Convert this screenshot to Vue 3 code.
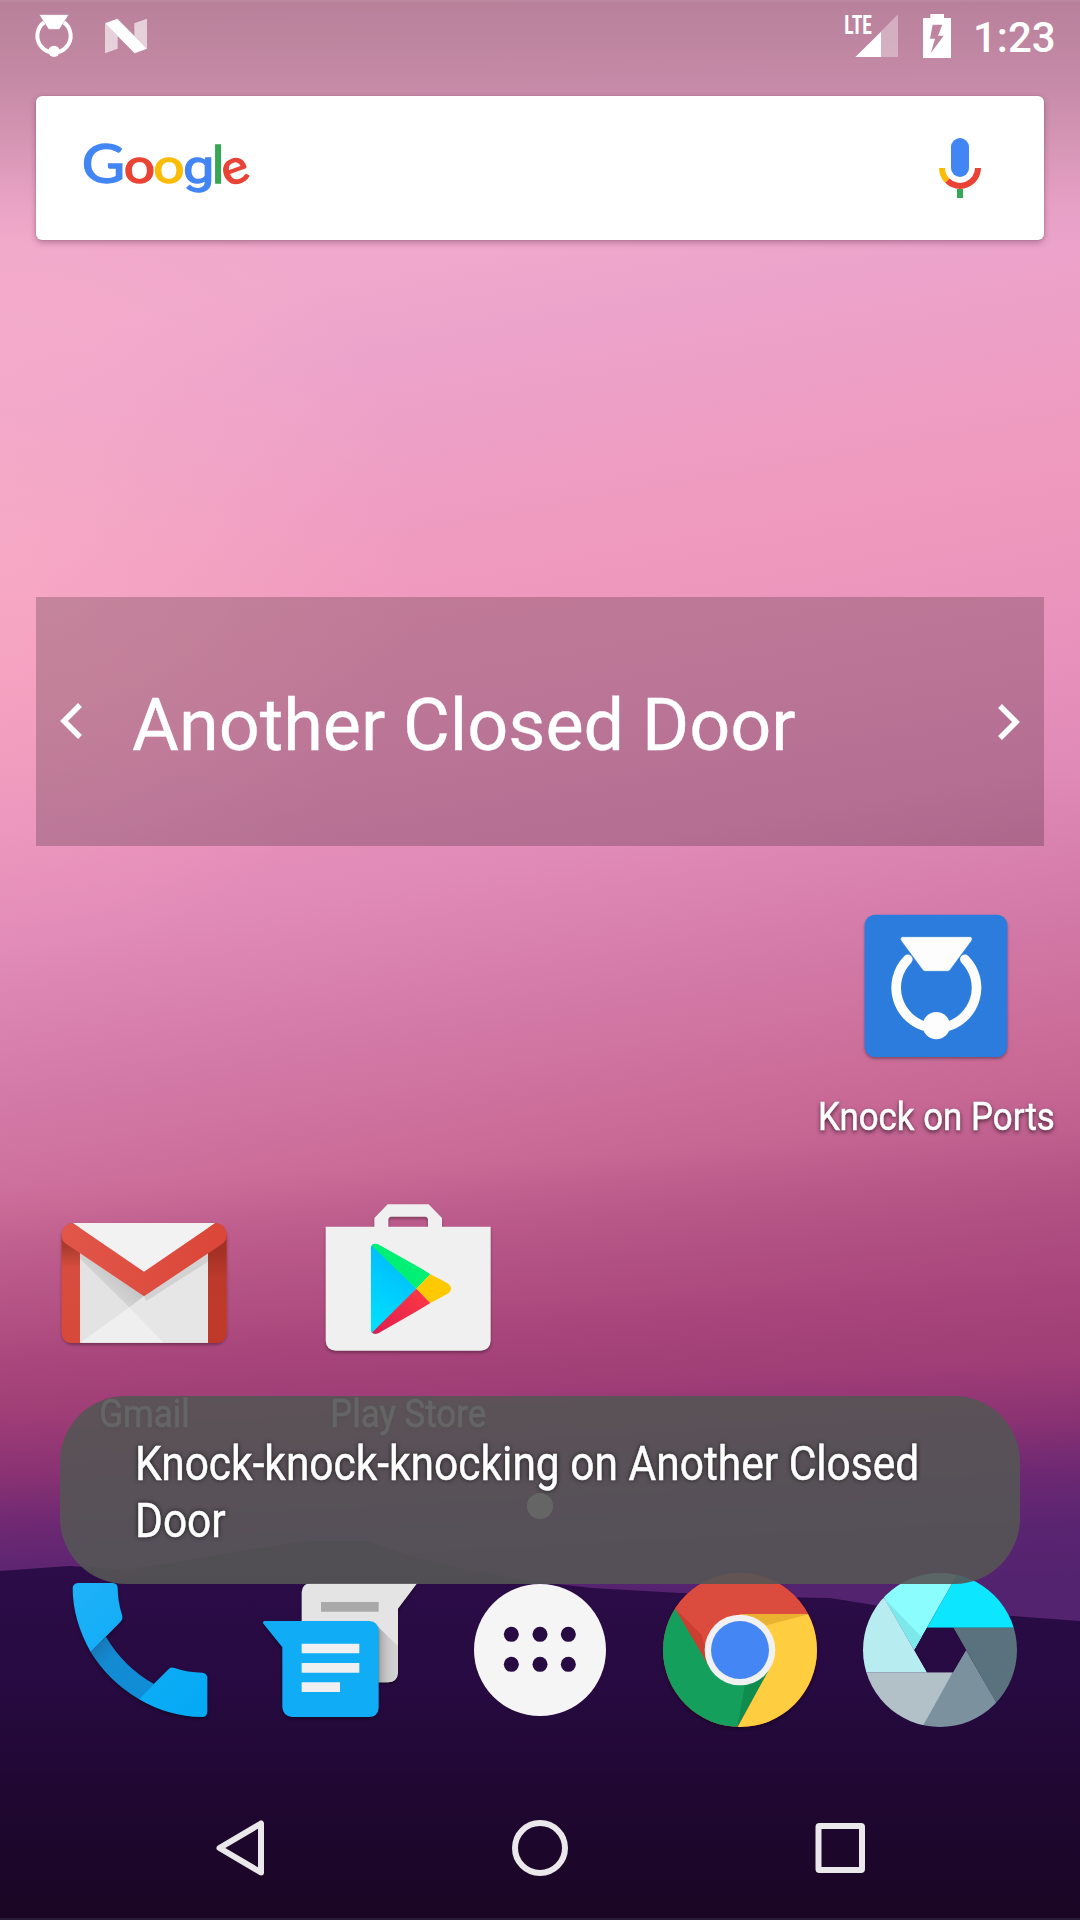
<script setup>
const dots = [[214, 223], [300, 223], [385, 223], [214, 313], [300, 313], [385, 313]]
</script>

<template>
  <main class="screen">
    <svg class="wallpaper" viewBox="0 0 1080 1920" aria-hidden="true">
      <defs>
        <linearGradient id="hill" x1="0" y1="1540" x2="0" y2="1920" gradientUnits="userSpaceOnUse">
          <stop offset="0" stop-color="#2d0d4a" />
          <stop offset=".4" stop-color="#260a40" />
          <stop offset=".7" stop-color="#1f0730" />
          <stop offset="1" stop-color="#1a0624" />
        </linearGradient>
      </defs>
      <path fill="url(#hill)" d="M0 1571L40 1568L70 1566L130 1570L227 1553L307 1541L367 1541L417 1558L480 1572L540 1582L592 1588L680 1593L770 1597L830 1598L880 1606L1013 1616L1080 1621V1920H0Z" />
      <path fill="#2a1c38" d="M0 1918H1080V1920H0Z" />
    </svg>

    <header class="status">
      <svg width="160" height="72" viewBox="0 0 480 216">
        <path d="M134 66A50 50 0 1 0 190 66" fill="none" stroke="#fff" stroke-width="12" />
        <path d="M118 44H206L178 88H146Z" fill="#fff" stroke="#b8869f" stroke-width="1" />
        <circle cx="162" cy="154" r="17" fill="#fff" />
        <path d="M315 70L353 108V146L315 160ZM441 56V146L403 108V70Z" fill="#fff" opacity=".62" />
        <path d="M315 70L352 56L441 146L404 160Z" fill="#fff" />
      </svg>
      <div class="status-right">
        <svg width="133" height="72" viewBox="180 0 399 216">
          <text class="lte" x="193" y="101" textLength="83" lengthAdjust="spacingAndGlyphs">LTE</text>
          <path d="M354 43V171H302V95Z" fill="#fff" opacity=".35" />
          <path d="M303 95V171H226Z" fill="#fff" />
          <path fill="#fff" fill-rule="evenodd" d="M451 42H492V54H513V174H429V54H451ZM458 74L450 116H465L452 160L491 107H474L487 74Z" />
        </svg>
        <time class="clock">1:23</time>
      </div>
    </header>

    <section class="search">
      <svg class="logo" width="180" height="80" viewBox="240 390 540 240" aria-label="Google">
        <text class="g-main" x="245" y="547" fill="#4285f4" stroke="#4285f4" font-size="160" textLength="130" lengthAdjust="spacingAndGlyphs">G</text>
        <text class="g-main" x="371" y="547" fill="#ea4335" stroke="#ea4335" font-size="144" textLength="94" lengthAdjust="spacingAndGlyphs">o</text>
        <text class="g-main" x="460" y="547" fill="#fbbc05" stroke="#fbbc05" font-size="144" textLength="94" lengthAdjust="spacingAndGlyphs">o</text>
        <text class="g-tail" x="549" y="547" fill="#4285f4" stroke="#4285f4" font-size="140" textLength="94" lengthAdjust="spacingAndGlyphs">g</text>
        <text class="g-main" x="636" y="547" fill="#34a853" stroke="#34a853" font-size="154">l</text>
        <text class="g-main" x="666" y="547" fill="#ea4335" stroke="#ea4335" font-size="144" textLength="80" lengthAdjust="spacingAndGlyphs" transform="rotate(-20 708 510)">e</text>
      </svg>
      <svg width="60" height="96" viewBox="450 360 180 288">
        <rect x="513" y="414" width="54" height="117" rx="27" fill="#4285f4" />
        <path d="M486 504A54 54 0 0 0 502 542" fill="none" stroke="#fbbc05" stroke-width="18" />
        <path d="M502 542A54 54 0 0 0 594 504" fill="none" stroke="#ea4335" stroke-width="18" />
        <rect x="531" y="567" width="18" height="27" fill="#34a853" />
      </svg>
    </section>

    <section class="widget">
      <svg width="72" height="80" viewBox="0 0 72 80"><path d="M44 23L28 39L44 55" /></svg>
      <span class="widget-title">Another Closed Door</span>
      <svg width="72" height="80" viewBox="0 0 72 80"><path d="M28 24L44 40L28 56" /></svg>
    </section>

    <section class="apps">
      <div class="app last-col">
        <svg width="264" height="180" viewBox="12 15 792 540">
          <rect class="shadow" x="194" y="74" width="428" height="427" rx="32" fill="#2b7cdd" />
          <path d="M323.400 208A121 121 0 0 0 384 411.400M494.600 208A121 121 0 0 1 434 411.400" fill="none" stroke="#fdfdfd" stroke-width="29" stroke-linecap="round" />
          <path d="M306 140H513Q519 144 515 152L451 239Q448 244 443 244H376Q371 244 368 240L303 152Q299 143 306 140Z" fill="#fdfdfd" stroke="#2b7cdd" stroke-width="2" />
          <circle cx="409" cy="407" r="41" fill="#fdfdfd" />
        </svg>
        <span class="label"><b>Knock on Ports</b></span>
      </div>
      <div class="app">
        <svg width="264" height="180" viewBox="-84 6 792 540">
          <defs>
            <clipPath id="mailBox"><rect x="120" y="99" width="384" height="359" /></clipPath>
            <linearGradient id="mailLeft" x1="0" y1="0" x2="0" y2="1"><stop offset=".1" stop-color="#a93a2e" /><stop offset=".3" stop-color="#d64d3f" /><stop offset="1" stop-color="#d7493a" /></linearGradient>
            <linearGradient id="mailRight" x1="0" y1="0" x2="0" y2="1"><stop offset=".15" stop-color="#a33124" /><stop offset=".4" stop-color="#bc3a2b" /><stop offset="1" stop-color="#c03928" /></linearGradient>
            <linearGradient id="fold" x1="0" y1="0" x2="1" y2="0"><stop offset="0" stop-color="#e05649" /><stop offset="1" stop-color="#db4638" /></linearGradient>
            <linearGradient id="flapShade" x1="268" y1="260" x2="190" y2="340" gradientUnits="userSpaceOnUse"><stop offset="0" stop-color="#c2c2c2" /><stop offset="1" stop-color="#dedede" /></linearGradient>
          </defs>
          <rect class="shadow" x="65" y="99" width="495" height="360" rx="36" fill="#d64d3f" />
          <path d="M65 135H122V459H99Q65 459 65 425Z" fill="url(#mailLeft)" />
          <path d="M503 135H560V425Q560 459 526 459H503Z" fill="url(#mailRight)" />
          <g clip-path="url(#mailBox)">
            <path d="M120 99H504V459H120Z" fill="#e3e3e3" />
            <path d="M312 320L504 190V459H372L268 352Z" fill="#e6e6e6" />
            <path d="M312 316L504 186V215L318 334Z" fill="#d2d2d2" />
            <path d="M120 190L312 318L268 352L120 206Z" fill="url(#flapShade)" />
            <path d="M120 459L268 352L372 459Z" fill="#efefef" />
          </g>
          <path d="M98 99H526L312 246Z" fill="#f2f2f2" />
          <path d="M98 99L312 245L526 99Q560 104 560 138Q560 152 546 162L312 319L79 162Q65 152 65 138Q65 104 98 99Z" fill="url(#fold)" />
        </svg>
        <span class="label"><b>Gmail</b></span>
      </div>
      <div class="app">
        <svg width="264" height="180" viewBox="708 6 792 540">
          <defs>
            <clipPath id="playClip"><path d="M992 175Q994 157 1013 162L1225 281Q1242 296 1225 310L1015 430Q994 436 992 418Z" /></clipPath>
            <linearGradient id="playBlue" x1=".5" y1="0" x2=".2" y2="1"><stop offset="0" stop-color="#00b9fb" /><stop offset="1" stop-color="#00e2ff" /></linearGradient>
            <linearGradient id="playRed" x1="1" y1="0" x2="0" y2="1"><stop offset="0" stop-color="#ff3a44" /><stop offset="1" stop-color="#dc1b50" /></linearGradient>
          </defs>
          <path class="shadow" fill="#f0f0f0" fill-rule="evenodd" d="M857 110H1003V84L1043 43H1166L1206 84V110H1352V453Q1350 480 1323 482H886Q859 480 857 453ZM1045 110H1164V88Q1163 80 1156 80H1053Q1046 80 1045 88Z" />
          <g clip-path="url(#playClip)">
            <path d="M980 150H1000L1129 296L1000 440H980Z" fill="url(#playBlue)" />
            <path d="M990 150H1020L1171 253L1129 296L994 166Z" fill="#00f076" />
            <path d="M1171 253L1260 296L1171 339L1129 296Z" fill="#ffc900" />
            <path d="M1129 296L1171 339L1010 440L990 434Z" fill="url(#playRed)" />
          </g>
        </svg>
        <span class="label"><b>Play Store</b></span>
      </div>
    </section>

    <div class="pages"><i></i></div>

    <section class="dock">
      <svg viewBox="0 0 600 540">
        <defs><linearGradient id="phoneGrad" x1="100" y1="70" x2="500" y2="470" gradientUnits="userSpaceOnUse"><stop offset="0" stop-color="#1eb1f8" /><stop offset="1" stop-color="#03a9f4" /></linearGradient>
        <linearGradient id="phoneNeck" x1="175" y1="250" x2="320" y2="395" gradientUnits="userSpaceOnUse"><stop offset="0" stop-color="#1878b8" /><stop offset=".3" stop-color="#138bd3" /><stop offset="1" stop-color="#0f8dd6" /></linearGradient></defs>
        <g class="shadow">
          <path d="M198 230Q250 320 342 372L296 417Q206 364 152 276Z" fill="url(#phoneNeck)" />
          <path d="M114 69H218Q233 70 233 84Q233 125 247 168Q249 177 243 184L152 276Q98 180 98 84Q99 70 114 69Z" fill="url(#phoneGrad)" />
          <path d="M296 417L387 326Q394 320 404 324Q444 338 487 338Q501 339 502 353V456Q501 471 486 471Q385 470 296 417Z" fill="url(#phoneGrad)" />
        </g>
      </svg>
      <svg viewBox="600 0 600 540">
        <defs><linearGradient id="msgShade" x1="1016" y1="0" x2="1074" y2="0" gradientUnits="userSpaceOnUse"><stop offset="0" stop-color="#a9a9a9" /><stop offset=".5" stop-color="#cacaca" /><stop offset="1" stop-color="#d4d4d4" /></linearGradient></defs>
        <path class="shadow" d="M812 69H1132L1074 146V337Q1072 366 1045 367H785V97Q786 71 812 69Z" fill="#e4e4e4" />
        <path d="M1005 192L1074 258V337Q1072 366 1045 367H1005Z" fill="url(#msgShade)" />
        <path d="M843 126H1016V155H843Z" fill="#a9a9a9" />
        <path class="shadow" d="M673 183H987Q1015 185 1016 212V443Q1014 470 987 471H756Q729 469 727 442V262L669 190Q668 184 673 183Z" fill="#10acf5" />
        <path d="M785 251H958V280H785ZM785 309H958V338H785ZM785 367H900V396H785Z" fill="#f0f0f0" />
      </svg>
      <svg viewBox="0 0 600 540">
        <circle cx="300" cy="270" r="198" fill="#f5f5f5" />
        <circle v-for="d in dots" :key="d.join()" :cx="d[0]" :cy="d[1]" r="22.500" fill="#280b43" />
      </svg>
      <svg viewBox="600 0 600 540">
        <defs><clipPath id="chromeClip"><circle cx="900" cy="270" r="231" /></clipPath></defs>
        <circle class="shadow" cx="900" cy="270" r="231" fill="#db4639" />
        <g clip-path="url(#chromeClip)">
          <path d="M660 30H1140V163H900L800 305L706 147Z" fill="#dc4c3e" />
          <path d="M706 147L797 305L795 262L785 225Z" fill="#cb3e30" />
          <path d="M706 147L812 327L900 376L986 333L890 502H640V147Z" fill="#14a05c" />
          <path d="M915 373L986 333L892 502Z" fill="#0f8c4e" />
          <path d="M900 163H1160V510H888L992 320L1004 270Z" fill="#ffcd40" />
          <path d="M915 163H1106L980 196Z" fill="#ebb130" />
        </g>
        <circle cx="900" cy="270" r="106" fill="#f1f1f1" />
        <circle cx="900" cy="270" r="87" fill="#4486f3" />
      </svg>
      <svg viewBox="30 0 600 540">
        <defs><clipPath id="camClip"><path clip-rule="evenodd" d="M99 270A231 231 0 1 1 561 270A231 231 0 1 1 99 270ZM253 270L291 337H369L408 270L370 203H291Z" /></clipPath></defs>
        <g clip-path="url(#camClip)">
          <path d="M50 20H395L253 270L163 115Z" fill="#8cfdff" />
          <path d="M163 115L253 270L275 232Z" fill="#7de8e9" />
          <path d="M395 20H600V203H291Z" fill="#0ce6ff" />
          <path d="M370 203H600V430H500Z" fill="#5a727d" />
          <path d="M408 270L498 426L560 520H260L369 337Z" fill="#7b929e" />
          <path d="M280 495L369 337H80V520H265Z" fill="#b2c1c8" />
          <path d="M163 115L291 337H80V115Z" fill="#b7ecf1" />
        </g>
      </svg>
    </section>

    <nav class="nav">
      <svg viewBox="0 0 300 144"><path d="M171 47.500V96.500L129.500 72Z" /></svg>
      <svg viewBox="0 0 300 144"><circle cx="150" cy="72" r="25" /></svg>
      <svg viewBox="0 0 300 144"><rect x="128.500" y="50" width="43.500" height="44" rx="1" /></svg>
    </nav>

    <div class="toast"><p>Knock-knock-knocking on Another Closed<br />Door</p></div>
  </main>
</template>

<style>
body { margin: 0; }
</style>

<style scoped>
.screen {
  position: relative;
  width: 1080px;
  height: 1920px;
  overflow: hidden;
  display: flex;
  flex-direction: column;
  color: #fff;
  font-family: Roboto, "Noto Sans", sans-serif;
  background:
    linear-gradient(rgba(255,255,255,.06) 2px, transparent 2px),
    linear-gradient(rgba(0,0,0,.235) 0, rgba(0,0,0,.18) 80px, rgba(0,0,0,.1) 150px, rgba(0,0,0,.03) 205px, transparent 245px),
    radial-gradient(ellipse 420px 420px at 0 550px, rgba(255,180,198,.5), rgba(255,180,198,0)),
    linear-gradient(177deg, rgba(180,80,133,0) 60%, rgba(170,70,124,.6) 67%, rgba(160,62,119,1) 71.5%, #8a3273 74.600%, #6d2872 77.300%, #5a2471 80%, #53236f 83%),
    linear-gradient(170deg, #f0a8c8 0%, #f0a8cc 15.9%, #eca3cb 20%, #ef9bc0 29%, #ef98bd 33%, #e992bc 39%, #e08ab7 45.300%, #d57caa 51%, #cb6c98 58%, #b65787 65.600%, #a04078 73%);
}
.wallpaper { position: absolute; inset: 0; width: 1080px; height: 1920px; }
.status, .search, .widget, .apps, .pages, .dock, .nav { position: relative; flex: none; }
.status { height: 72px; display: flex; justify-content: space-between; }
.status-right { display: flex; }
.lte { font: 700 78px "Roboto Condensed", Roboto, sans-serif; fill: #fff; }
.clock { width: 107px; font-size: 42px; font-weight: 500; line-height: 76px; white-space: nowrap; }
.search {
  height: 144px;
  margin: 24px 36px 0;
  padding: 0 54px 0 44px;
  box-sizing: border-box;
  display: flex;
  align-items: center;
  justify-content: space-between;
  background: #fff;
  border-radius: 6px;
  box-shadow: 0 3px 6px rgba(90,40,70,.35), 0 0 2px rgba(90,40,70,.3);
}
.logo { margin-top: 5px; }
.g-main { font-family: Lato, sans-serif; stroke-width: 4; }
.g-tail { font-family: Roboto, sans-serif; stroke-width: 4; }
.widget {
  height: 249px;
  margin: 357px 36px 0;
  display: flex;
  align-items: center;
  background: rgba(0,0,0,.2);
}
.widget path { fill: none; stroke: #fff; stroke-width: 5.500; }
.widget-title { flex: 1; padding: 9px 0 0 24px; font-size: 72px; line-height: 86px; letter-spacing: -.05px; white-space: nowrap; -webkit-text-stroke: .3px #fff; }
.apps { display: grid; grid-template-columns: repeat(4, 264px); grid-auto-rows: 297px; padding: 0 12px; }
.last-col { grid-column: 4; }
.app { padding-top: 49px; display: flex; flex-direction: column; align-items: center; }
.app svg { display: block; }
.shadow { filter: drop-shadow(0 6px 5px rgba(0,0,0,.32)); }
.label { margin-top: 19px; font-size: 39px; line-height: 46px; white-space: nowrap; text-shadow: 0 2px 5px rgba(0,0,0,.75); }
.label b { display: block; font-weight: 400; transform: scaleX(.895); -webkit-text-stroke: .5px #fff; }
.pages { height: 120px; display: flex; align-items: center; justify-content: center; padding-top: 12px; box-sizing: border-box; }
.pages i { width: 26px; height: 26px; border-radius: 50%; background: #fff; }
.dock { display: flex; padding: 0 40px; height: 180px; }
.dock svg { width: 200px; height: 180px; display: block; }
.nav { margin-top: 36px; padding: 0 90px; height: 144px; display: flex; }
.nav svg { width: 300px; height: 144px; fill: none; stroke: #ebe8ec; stroke-width: 6; stroke-linejoin: round; }
.toast {
  position: absolute;
  left: 60px;
  top: 1396px;
  width: 960px;
  height: 188px;
  box-sizing: border-box;
  padding: 39px 75px;
  border-radius: 66px;
  background: rgba(85,85,85,.905);
}
.toast p { margin: 0; font-size: 48px; line-height: 57px; white-space: nowrap; transform: scaleX(.885); transform-origin: 0 0; text-shadow: 0 0 6px rgba(0,0,0,.75); -webkit-text-stroke: .5px #fff; }
</style>
